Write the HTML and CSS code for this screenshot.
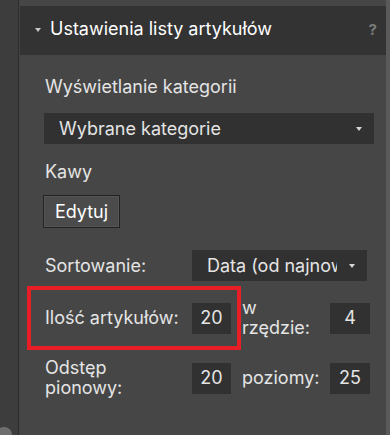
FILE: index.html
```html
<!DOCTYPE html>
<html lang="pl">
<head>
<meta charset="utf-8">
<link rel="stylesheet" href="styles.css">
</head>
<body>
<div class="app">
  <div class="gutter"><span class="knob"></span></div>
  <div class="panel">
    <div class="header">
      <span class="caret"></span>
      <span class="title">Ustawienia listy artykułów</span>
      <span class="help">?</span>
    </div>
    <div class="content">
      <div class="label first">Wyświetlanie kategorii</div>
      <div class="select wide"><span class="sel-text">Wybrane kategorie</span><span class="arrow"></span></div>
      <div class="label kawy">Kawy</div>
      <button class="btn">Edytuj</button>
      <div class="sort-row">
        <div class="row-label">Sortowanie:</div>
        <div class="select narrow"><span class="sel-text">Data (od najnowszych)</span><span class="arrow"></span></div>
      </div>
      <div class="grid">
        <div class="row-label">Ilość artykułów:</div>
        <div class="num">20</div>
        <div class="label2">w rzędzie:</div>
        <div class="num">4</div>
        <div class="row-label">Odstęp pionowy:</div>
        <div class="num">20</div>
        <div class="label2">poziomy:</div>
        <div class="num">25</div>
      </div>
    </div>
    <div class="highlight"></div>
  </div>
  <div class="edge"></div>
</div>
</body>
</html>
```
FILE: styles.css
```css
* { box-sizing: border-box; }
html, body { margin: 0; padding: 0; }
body {
  background: #3d3d3d;
  font-family: Inter, "Noto Sans", sans-serif;
  font-size: 18px;
  color: #e4e4e4;
  width: 390px;
  height: 435px;
  overflow: hidden;
}
.app { display: flex; height: 435px; }
.gutter {
  width: 19px;
  flex: none;
  border-right: 1px solid #2b2b2b;
  background: #3d3d3d;
  position: relative;
}
.knob {
  position: absolute;
  left: -4px;
  top: 427px;
  width: 16px;
  height: 16px;
  border-radius: 50%;
  background: #6e6e6e;
}
.panel {
  flex: 1;
  background: #464646;
  padding-top: 6px;
  position: relative;
}
.edge { width: 4px; flex: none; background: #5a5a5a; }
.header {
  margin-left: 1px;
  height: 49px;
  background: #333333;
  display: flex;
  align-items: center;
  padding-left: 15px;
  padding-right: 9px;
}
.caret {
  width: 0; height: 0;
  border-left: 3.5px solid transparent;
  border-right: 3.5px solid transparent;
  border-top: 4px solid #c8c8c8;
  margin-right: 9px;
  margin-top: -1px;
}
.title { color: #ffffff; font-size: 18px; flex: 1; line-height: 20px; margin-top: -3px; }
.help { color: #7a7a7a; font-weight: 700; font-size: 15px; margin-top: -3px; }
.content { padding-left: 26px; }
.label { line-height: 20px; }
.first { margin-top: 22px; }
.select {
  background: #313131;
  height: 31px;
  display: flex;
  align-items: center;
  justify-content: space-between;
  padding-left: 15px;
  padding-right: 12px;
  margin-top: 16px;
  overflow: hidden;
}
.wide { width: 330px; margin-left: -1px; }
.sel-text { white-space: nowrap; overflow: hidden; line-height: 20px; }
.narrow { width: 175px; margin-top: 0; padding-right: 12px; }
.narrow .sel-text { width: 130px; }
.arrow {
  flex: none;
  width: 0; height: 0;
  border-left: 3.5px solid transparent;
  border-right: 3.5px solid transparent;
  border-top: 4px solid #d6d6d6;
  margin-left: 6px;
}
.kawy { margin-top: 18px; }
.btn {
  display: block;
  margin-top: 13px;
  margin-left: -2px;
  height: 33px;
  width: 77px;
  background: #4b4b4b;
  border: 1px solid #222;
  box-shadow: inset 0 0 0 1px #555;
  color: #fff;
  font-family: inherit;
  font-size: 18px;
  padding: 0;
}
.sort-row {
  margin-top: 22px;
  display: flex;
  align-items: center;
  height: 31px;
}
.sort-row .row-label { width: 147px; }
.row-label { line-height: 20px; }
.grid {
  margin-top: 17px;
  display: grid;
  grid-template-columns: 147px 39px 99px 40px;
  grid-auto-rows: 40px;
  row-gap: 20px;
  align-items: center;
}
.grid .row-label { width: 80px; }
.grid .row-label:first-child { width: 147px; }
.num {
  background: #313131;
  height: 31px;
  display: flex;
  align-items: center;
  justify-content: center;
  line-height: 20px;
}
.label2 { padding-left: 11px; line-height: 20px; width: 92px; }
.highlight {
  position: absolute;
  left: 8px;
  top: 286px;
  width: 214px;
  height: 64px;
  border: 4px solid #e81e26;
}
```
